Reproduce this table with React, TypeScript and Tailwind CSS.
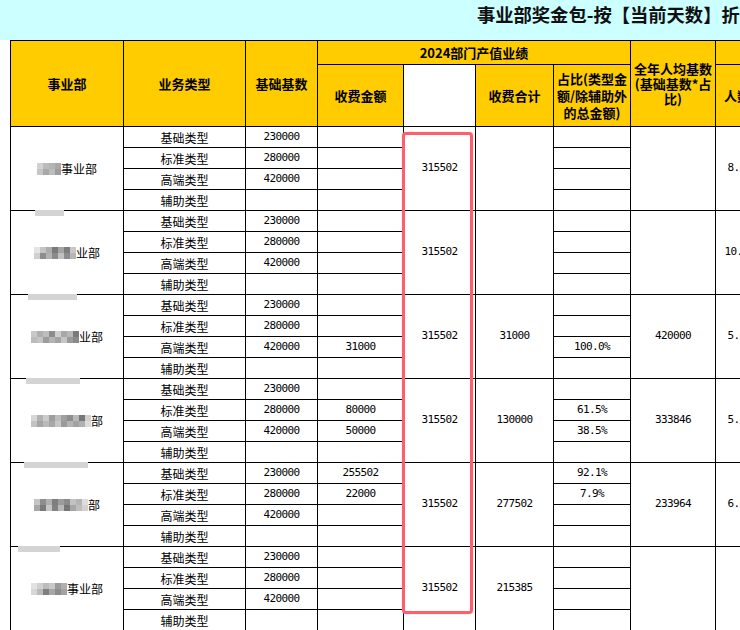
import React from "react";

const cjk = "font-['Noto_Sans_CJK_SC',sans-serif]";
const num = "font-['DejaVu_Sans_Mono',monospace] text-[11px] tracking-[-0.6px]";

const types = [
  { name: "基础类型", base: "230000" },
  { name: "标准类型", base: "280000" },
  { name: "高端类型", base: "420000" },
  { name: "辅助类型", base: "" },
];

type Group = {
  blocks: string[][];
  suffix: string;
  fee: string[];
  total: string;
  ratio: string[];
  avg: string;
  people: string;
};

const groups: Group[] = [
  {
    blocks: [
      ["bg-[#d2d2d2]", "bg-[#bcbcbc]", "bg-[#b4b4b4]", "bg-[#a8a8a8]"],
      ["bg-[#c6c6c6]", "bg-[#a9a9a9]", "bg-[#bdbdbd]", "bg-[#9e9e9e]"],
    ],
    suffix: "事业部",
    fee: ["", "", "", ""],
    total: "",
    ratio: ["", "", "", ""],
    avg: "",
    people: "8.00",
  },
  {
    blocks: [
      ["bg-[#e4e4e4]", "bg-[#c4c4c4]", "bg-[#acacac]", "bg-[#7a7a7a]", "bg-[#a4a4a4]", "bg-[#7c7c7c]", "bg-[#c8c8c8]"],
      ["bg-[#cfcfcf]", "bg-[#8e8e8e]", "bg-[#b2b2b2]", "bg-[#8a8a8a]", "bg-[#c0c0c0]", "bg-[#8c8c8c]", "bg-[#b6b6b6]"],
    ],
    suffix: "业部",
    fee: ["", "", "", ""],
    total: "",
    ratio: ["", "", "", ""],
    avg: "",
    people: "10.00",
  },
  {
    blocks: [
      ["bg-[#c8c8c8]", "bg-[#b0b0b0]", "bg-[#bdbdbd]", "bg-[#8c8c8c]", "bg-[#cfcfcf]", "bg-[#a8a8a8]", "bg-[#b8b8b8]", "bg-[#7a7a7a]"],
      ["bg-[#bbbbbb]", "bg-[#c4c4c4]", "bg-[#9c9c9c]", "bg-[#b4b4b4]", "bg-[#a4a4a4]", "bg-[#c6c6c6]", "bg-[#9a9a9a]", "bg-[#8a8a8a]"],
    ],
    suffix: "业部",
    fee: ["", "", "31000", ""],
    total: "31000",
    ratio: ["", "", "100.0%", ""],
    avg: "420000",
    people: "5.00",
  },
  {
    blocks: [
      ["bg-[#d6d6d6]", "bg-[#b2b2b2]", "bg-[#cccccc]", "bg-[#9e9e9e]", "bg-[#bcbcbc]", "bg-[#a0a0a0]", "bg-[#8e8e8e]", "bg-[#b8b8b8]", "bg-[#777777]", "bg-[#d0d0d0]"],
      ["bg-[#c2c2c2]", "bg-[#a6a6a6]", "bg-[#bababa]", "bg-[#a8a8a8]", "bg-[#c8c8c8]", "bg-[#9a9a9a]", "bg-[#b4b4b4]", "bg-[#a2a2a2]", "bg-[#b0b0b0]", "bg-[#dcdcdc]"],
    ],
    suffix: "部",
    fee: ["", "80000", "50000", ""],
    total: "130000",
    ratio: ["", "61.5%", "38.5%", ""],
    avg: "333846",
    people: "5.00",
  },
  {
    blocks: [
      ["bg-[#c4c4c4]", "bg-[#8e8e8e]", "bg-[#b0b0b0]", "bg-[#7e7e7e]", "bg-[#9c9c9c]", "bg-[#8a8a8a]", "bg-[#c2c2c2]", "bg-[#b4b4b4]", "bg-[#dddddd]"],
      ["bg-[#a8a8a8]", "bg-[#7a7a7a]", "bg-[#c6c6c6]", "bg-[#828282]", "bg-[#b8b8b8]", "bg-[#767676]", "bg-[#a6a6a6]", "bg-[#bebebe]", "bg-[#d2d2d2]"],
    ],
    suffix: "部",
    fee: ["255502", "22000", "", ""],
    total: "277502",
    ratio: ["92.1%", "7.9%", "", ""],
    avg: "233964",
    people: "6.00",
  },
  {
    blocks: [
      ["bg-[#e2e2e2]", "bg-[#d0d0d0]", "bg-[#bcbcbc]", "bg-[#c8c8c8]", "bg-[#9a9a9a]", "bg-[#b0b0b0]"],
      ["bg-[#d6d6d6]", "bg-[#bababa]", "bg-[#7e7e7e]", "bg-[#a6a6a6]", "bg-[#8c8c8c]", "bg-[#a2a2a2]"],
    ],
    suffix: "事业部",
    fee: ["", "", "", ""],
    total: "215385",
    ratio: ["", "", "", ""],
    avg: "",
    people: "",
  },
];

// grey blur smudges sitting over the group borders in the first column
const smudges = [
  "left-[35px] top-[210px] w-[29px]",
  "left-[28px] top-[294px] w-[49px]",
  "left-[26px] top-[378px] w-[54px]",
  "left-[24px] top-[462px] w-[64px]",
  "left-[18px] top-[546px] w-[42px]",
];

function Mosaic({ blocks }: { blocks: string[][] }) {
  return (
    <span className="flex flex-col">
      {blocks.map((row, i) => (
        <span key={i} className="flex">
          {row.map((c, j) => (
            <span key={j} className={`h-[6px] w-[6px] ${c}`} />
          ))}
        </span>
      ))}
    </span>
  );
}

const th = "border border-black bg-[#ffcc00] p-0 text-[13px] font-bold text-black";
const td = "border border-black bg-white p-0 text-center text-black";

export default function App() {
  return (
    <div className={`relative h-[630px] w-[740px] overflow-hidden bg-white ${cjk}`}>
      <div className="h-[40px] bg-[#ccffff] pl-[477px] pt-[1px]">
        <h1 className="whitespace-nowrap text-[18.3px] font-bold leading-[26px] text-[#111]">
          事业部奖金包-按【当前天数】折算
        </h1>
      </div>

      <div className="pl-[10px]">
        <table className="w-[753px] table-fixed border-collapse">
          <colgroup>
            <col className="w-[113px]" />
            <col className="w-[122px]" />
            <col className="w-[72px]" />
            <col className="w-[86px]" />
            <col className="w-[72px]" />
            <col className="w-[78px]" />
            <col className="w-[77px]" />
            <col className="w-[85px]" />
            <col className="w-[48px]" />
          </colgroup>
          <thead>
            <tr className="h-[24px]">
              <th rowSpan={2} className={th}>事业部</th>
              <th rowSpan={2} className={th}>业务类型</th>
              <th rowSpan={2} className={th}>基础基数</th>
              <th colSpan={4} className={th}>2024部门产值业绩</th>
              <th rowSpan={2} className={`${th} leading-[15px]`}>
                全年人均基数
                <br />
                (基础基数*占
                <br />
                比)
              </th>
              <th className={`${th} bg-[#00ccff]`} />
            </tr>
            <tr className="h-[62px]">
              <th className={th}>收费金额</th>
              <th className={`${th} bg-white`} />
              <th className={th}>收费合计</th>
              <th className={`${th} leading-[17px]`}>
                占比(类型金
                <br />
                额/除辅助外
                <br />
                的总金额)
              </th>
              <th className={`${th} bg-[#00ccff] whitespace-nowrap pl-[8px] text-left`}>人数</th>
            </tr>
          </thead>
          <tbody>
            {groups.map((g, gi) =>
              types.map((t, ti) => (
                <tr key={`${gi}-${ti}`} className="h-[21px]">
                  {ti === 0 && (
                    <td rowSpan={4} className={td}>
                      <span className="flex items-center justify-center text-[12px] leading-[12px]">
                        <Mosaic blocks={g.blocks} />
                        <span>{g.suffix}</span>
                      </span>
                    </td>
                  )}
                  <td className={`${td} text-[12px] leading-[19px]`}>{t.name}</td>
                  <td className={`${td} ${num}`}>{t.base}</td>
                  <td className={`${td} ${num}`}>{g.fee[ti]}</td>
                  {ti === 0 && (
                    <>
                      <td rowSpan={4} className={`${td} ${num}`}>315502</td>
                      <td rowSpan={4} className={`${td} ${num}`}>{g.total}</td>
                    </>
                  )}
                  <td className={`${td} ${num}`}>{g.ratio[ti]}</td>
                  {ti === 0 && (
                    <>
                      <td rowSpan={4} className={`${td} ${num}`}>{g.avg}</td>
                      <td rowSpan={4} className={`${td} ${num}`}>{g.people}</td>
                    </>
                  )}
                </tr>
              ))
            )}
          </tbody>
        </table>
      </div>

      {smudges.map((s) => (
        <div key={s} className={`absolute h-[6px] bg-[#d4d4d4] ${s}`} />
      ))}

      <div className="absolute left-[402px] top-[132px] h-[482px] w-[71px] rounded-[4px] border-[3px] border-[#ff5f6d] shadow-[0_0_1px_#ff9aa4]" />
    </div>
  );
}
